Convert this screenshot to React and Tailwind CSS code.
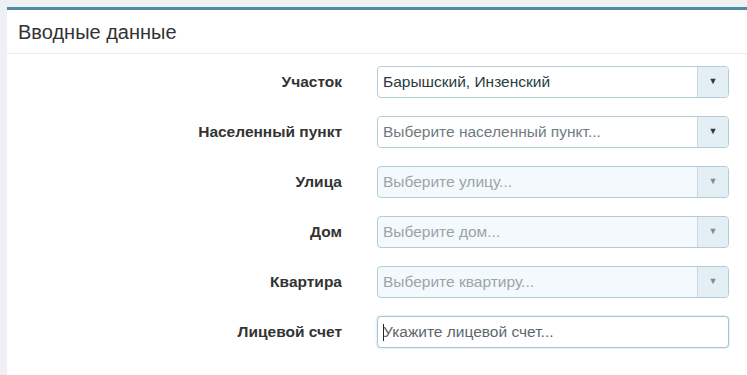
const rows = [
  { label: 'Участок', value: 'Барышский, Инзенский', select: true },
  { label: 'Населенный пункт', placeholder: 'Выберите населенный пункт...', select: true },
  { label: 'Улица', placeholder: 'Выберите улицу...', select: true, disabled: true },
  { label: 'Дом', placeholder: 'Выберите дом...', select: true, disabled: true },
  { label: 'Квартира', placeholder: 'Выберите квартиру...', select: true, disabled: true },
  { label: 'Лицевой счет', placeholder: 'Укажите лицевой счет...' },
];

function SelectBox({ value, placeholder, disabled }) {
  return (
    <div
      className={`flex h-[32px] w-[352px] items-stretch rounded-[4px] border border-[#b3cdd6] ${
        disabled ? 'bg-[#f3f9fc]' : 'bg-white'
      }`}
    >
      <div
        className={`flex flex-1 items-center pl-[5px] text-[15.5px] ${
          value ? 'text-[#2a3b3f]' : disabled ? 'text-[#9aa5a9]' : 'text-[#6f7b80]'
        }`}
      >
        {value || placeholder}
      </div>
      <div className="flex w-[31px] items-center justify-center rounded-r-[3px] border-l border-[#c7d8df] bg-[#e4eff5]">
        <span className={`text-[9px] ${disabled ? 'text-[#7a8e96]' : 'text-[#263a44]'}`}>▼</span>
      </div>
    </div>
  );
}

function TextBox({ placeholder }) {
  return (
    <div className="flex h-[32px] w-[352px] items-center rounded-[4px] border border-[#a8c6d2] bg-white pl-[5px] text-[15.5px] text-[#5c676b] shadow-[0_0_2px_rgba(102,160,190,0.5)]">
      <span className="mr-[-1px] h-[17px] w-px bg-[#222]" />
      {placeholder}
    </div>
  );
}

export default function App() {
  return (
    <div
      className="h-[375px] w-[747px] overflow-hidden bg-[#eef0f4] pl-[7px] pt-[7px]"
      style={{ fontFamily: 'Arial, "Liberation Sans", sans-serif' }}
    >
      <div className="h-full border-t-[3px] border-[#4f8aa5] bg-white">
        <div className="flex h-[44px] items-center border-b border-[#ececec] pl-[11px] text-[20px] text-[#333]">
          Вводные данные
        </div>
        <div className="flex flex-col gap-[18px] pt-[12px]">
          {rows.map((r) => (
            <div key={r.label} className="flex items-center">
              <div className="w-[335px] text-right text-[15.5px] font-bold text-[#333]">{r.label}</div>
              <div className="ml-[35px]">
                {r.select ? (
                  <SelectBox value={r.value} placeholder={r.placeholder} disabled={r.disabled} />
                ) : (
                  <TextBox placeholder={r.placeholder} />
                )}
              </div>
            </div>
          ))}
        </div>
      </div>
    </div>
  );
}
